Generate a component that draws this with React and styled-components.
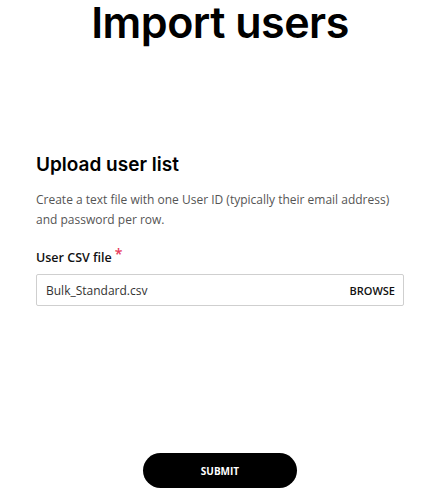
import styled, { createGlobalStyle } from "styled-components"

const GlobalStyle = createGlobalStyle`
    body {
        margin: 0;
        background: #fff;
        font-family: 'Open Sans', 'Noto Sans', sans-serif;
    }
`

export default function App() {
    return (
        <Page>
            <GlobalStyle />
            <Title>Import users</Title>
            <Form>
                <SectionTitle>Upload user list</SectionTitle>
                <Description>
                    Create a text file with one User ID (typically their email address) and password per row.
                </Description>
                <Label>User CSV file<Required>*</Required></Label>
                <FileField>
                    <FileName>Bulk_Standard.csv</FileName>
                    <Browse>BROWSE</Browse>
                </FileField>
            </Form>
            <Footer>
                <SubmitButton>SUBMIT</SubmitButton>
            </Footer>
        </Page>
    )
}

const Page = styled.div`
    width: 440px;
    height: 497px;
    display: flex;
    flex-direction: column;
    box-sizing: border-box;
`
const Title = styled.h1`
    margin: 0;
    height: 46px;
    font-family: 'Inter', sans-serif;
    font-size: 43px;
    font-weight: 600;
    letter-spacing: -0.5px;
    line-height: 44px;
    text-align: center;
    color: #000;
`
const Form = styled.div`
    padding: 106px 36px 0 36px;
    display: flex;
    flex-direction: column;
`
const SectionTitle = styled.h2`
    margin: 0;
    font-family: 'Inter', sans-serif;
    font-size: 19px;
    font-weight: 600;
    line-height: 26px;
    color: #000;
`
const Description = styled.p`
    margin: 12px 0 0;
    font-size: 12px;
    line-height: 20px;
    color: #555;
`
const Label = styled.div`
    margin-top: 19px;
    font-size: 12.5px;
    font-weight: 600;
    line-height: 18px;
    color: #111;
`
const Required = styled.span`
    color: #e8395b;
    margin-left: 3px;
    font-size: 14px;
    vertical-align: top;
    position: relative;
    top: -4px;
`
const FileField = styled.div`
    margin-top: 7px;
    height: 30px;
    border: 1px solid #cfcfcf;
    border-radius: 2px;
    display: flex;
    align-items: center;
    justify-content: space-between;
    padding: 0 8px 0 9px;
`
const FileName = styled.span`
    font-size: 12px;
    color: #333;
`
const Browse = styled.span`
    font-size: 11px;
    font-weight: 600;
    color: #111;
`
const Footer = styled.div`
    margin-top: auto;
    padding-bottom: 9px;
    display: flex;
    justify-content: center;
`
const SubmitButton = styled.button`
    width: 154px;
    height: 35px;
    border: none;
    border-radius: 18px;
    background: #000;
    color: #fff;
    font-family: 'Open Sans', sans-serif;
    font-size: 10px;
    font-weight: 700;
`
